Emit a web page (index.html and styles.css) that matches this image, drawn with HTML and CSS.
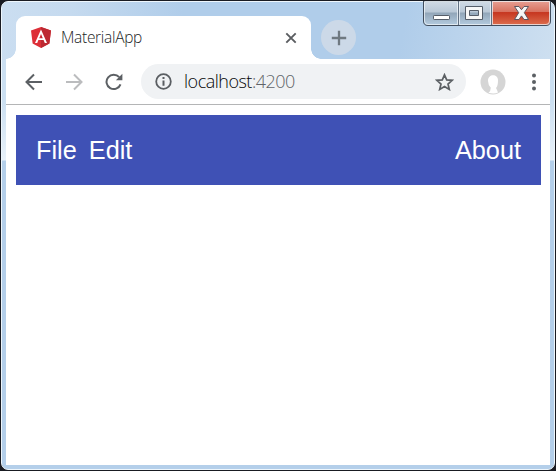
FILE: index.html
```html
<!DOCTYPE html>
<html lang="en">
<head>
<meta charset="utf-8">
<title>MaterialApp</title>
<link rel="stylesheet" href="styles.css">
</head>
<body>
<div class="window">
  <header class="titlebar">
    <div class="tab">
      <svg class="logo" width="20" height="21" viewBox="0 0 20 21"><path fill="#dd2f38" d="M10 0 20 3.6 18.4 16.4 10 21 1.6 16.4 0 3.6Z"/><path fill="#bd2932" d="M10 0 20 3.6 18.4 16.4 10 21Z"/><path fill="#fff" fill-rule="evenodd" d="M10 2.6 4 16H6.2L7.4 13H12.6L13.8 16H16ZM10 7 11.8 11.2H8.2Z"/></svg>
      <span class="tab-title">MaterialApp</span>
      <svg class="tab-close" width="12" height="12" viewBox="0 0 12 12"><path d="M1.3 1.3 10.7 10.7M10.7 1.3 1.3 10.7" stroke="#5a5d60" stroke-width="1.9"/></svg>
    </div>
    <div class="new-tab"><svg width="16" height="16" viewBox="0 0 16 16"><path d="M8 .8V15.2M.8 8H15.2" stroke="#6f7981" stroke-width="2.3"/></svg></div>
    <svg class="controls" width="128" height="26" viewBox="0 0 128 26">
      <defs>
        <linearGradient id="glass" x2="0" y2="1"><stop offset="0" stop-color="#d1dbe6"/><stop offset=".46" stop-color="#b8c7d6"/><stop offset=".48" stop-color="#91a5b8"/><stop offset="1" stop-color="#b5cce0"/></linearGradient>
        <linearGradient id="red" x2="0" y2="1"><stop offset="0" stop-color="#e8a094"/><stop offset=".46" stop-color="#d7705e"/><stop offset=".48" stop-color="#c63620"/><stop offset="1" stop-color="#dc6d4e"/></linearGradient>
      </defs>
      <path d="M.5 0V20Q.5 24.5 5 24.5H123Q127.500 24.500 127.500 20V0Z" fill="url(#glass)" stroke="#424e5e"/>
      <path d="M69 0H127V20Q127 24 123 24H69Z" fill="url(#red)"/>
      <path d="M1.500 1V20Q1.500 23.500 5 23.500H34.500V.5H1.500M36.500 .5H67.500V23.500H36.500ZM69.500 .5H126.500V20Q126.500 23.500 123 23.500H69.500Z" fill="none" stroke="#eff4f8" stroke-opacity=".75"/>
      <path d="M35.500 0V24M68.500 0V24" stroke="#627183"/>
      <rect x="10.500" y="14.500" width="16" height="4" rx=".7" fill="#fff" stroke="#555d69"/>
      <path fill="#f7f7f7" fill-rule="evenodd" stroke="#555d69" d="M42.500 5.500H59.500V18.500H42.500ZM46.500 9.500V14.500H55.500V9.500Z"/>
      <path fill="#f6f6f6" stroke="#5d5660" stroke-linejoin="round" d="M91.500 5.500H96L98.500 8.700 101 5.500H105.500L101.300 11.700 105.500 18.500H101L98.500 14.900 96 18.500H91.500L95.700 11.700Z"/>
    </svg>
  </header>
  <div class="toolbar">
    <svg class="back" width="18" height="18" viewBox="0 0 18 18"><path d="M17 9H2M9 1.500 1.500 9 9 16.500"/></svg>
    <svg class="forward" width="18" height="18" viewBox="0 0 18 18"><path d="M1 9H16M9 1.500 16.500 9 9 16.500"/></svg>
    <svg class="reload" width="18" height="18" viewBox="0 0 18 18"><path d="M15.500 11.300A7.200 7.200 0 1 1 14.200 4.200" fill="none" stroke="#5c6064" stroke-width="2"/><path d="M17.400 .7V7.200H10.900Z" fill="#5c6064"/></svg>
    <div class="address">
      <svg width="17" height="17" viewBox="0 0 17 17"><circle cx="8.500" cy="8.500" r="7.300" fill="none" stroke="#5a5e62" stroke-width="1.800"/><path d="M8.500 4V6M8.500 7.600V12.800" stroke="#5a5e62" stroke-width="2"/></svg>
      <span class="url">localhost<span class="port">:4200</span></span>
      <svg class="star" width="19" height="18" viewBox="0 0 19 18"><path d="M9.500 1.800 11.700 6.900 17.200 7.300 13 11 14.300 16.400 9.500 13.500 4.700 16.400 6 11 1.800 7.300 7.300 6.900Z" fill="none" stroke="#5c6064" stroke-width="1.700"/></svg>
    </div>
    <svg class="avatar" width="26" height="26" viewBox="0 0 26 26"><circle cx="13" cy="13" r="12.500" fill="#d5d5d5"/><path d="M8 12C7.700 4.500 18 4.300 18 11 18 15 17.500 17.500 16 19L17 21 18 23.500Q14 25.500 8.500 23.800 10.800 22 10.800 18.800 8.200 16.500 8 12Z" fill="#fff"/></svg>
    <svg class="more" width="4" height="18" viewBox="0 0 4 18"><g fill="#5c6064"><circle cx="2" cy="2.500" r="2"/><circle cx="2" cy="9" r="2"/><circle cx="2" cy="15.500" r="2"/></g></svg>
  </div>
  <main class="page">
    <nav class="menu"><span>File</span><span>Edit</span><span class="about">About</span></nav>
  </main>
</div>
</body>
</html>
```
FILE: styles.css
```css
* { box-sizing: border-box; }
body { margin: 0; background: #191b22; }
.window {
  width: 554px; height: 469px; margin: 1px; padding: 0 4px 4px;
  border: 1px solid #eef6fc; border-radius: 7px;
  display: flex; flex-direction: column;
  background: linear-gradient(#cbdff1 0, #cbdff1 100px, #e8f1f9 158px, #b4cfea 159px, #b4cfea 100%);
  position: relative;
}
.window::before {
  content: ""; position: absolute; inset: 0 0 auto; height: 58px; border-radius: 6px 6px 0 0;
  background: linear-gradient(100deg, #cbdef1 0, #c5daef 70px, #b0cdea 180px, #b0cdea 400px, #bfd6ed 480px, #cddff0 550px);
}
.titlebar { position: relative; height: 57px; flex: none; display: flex; align-items: flex-end; padding-left: 10px; }
.tab {
  position: relative; width: 295px; height: 43px; flex: none; padding: 0 14px 0 15px;
  background: #fff; border-radius: 9px 9px 0 0; display: flex; align-items: center;
}
.tab::before, .tab::after { content: ""; position: absolute; bottom: 0; width: 10px; height: 10px; }
.tab::before { left: -10px; background: radial-gradient(circle at 0 0, transparent 9.5px, #fff 10px); }
.tab::after { right: -10px; background: radial-gradient(circle at 100% 0, transparent 9.5px, #fff 10px); }
.tab-title { margin: 0 0 1px 10px; font: 300 15.500px/20px "Open Sans", sans-serif; color: #222426; letter-spacing: -.3px; }
.tab-close { margin-left: auto; }
.new-tab {
  width: 35px; height: 35px; margin: 0 0 4px 10px; border-radius: 50%; background: #ccd9e8;
  display: flex; align-items: center; justify-content: center;
}
.controls { margin-left: auto; margin-right: -1px; align-self: flex-start; margin-top: -1px; }
.toolbar {
  position: relative; height: 46px; flex: none; background: #fff; border-bottom: 1px solid #b4b5b6;
  display: flex; align-items: center; padding: 0 14px 0 19px;
}
.back, .forward { fill: none; stroke: #5c6064; stroke-width: 2; }
.forward { stroke: #bbbcbe; margin-left: 22px; }
.reload { margin-left: 22px; }
.address {
  width: 325px; height: 35px; margin-left: 18px; border-radius: 18px; background: #f0f2f4;
  display: flex; align-items: center; padding: 0 12px 0 14px;
}
.url { margin: 0 0 1px 12px; font: 300 18px/24px "Open Sans", sans-serif; color: #050607; letter-spacing: -.5px; }
.port { color: #606468; }
.star { margin-left: auto; }
.avatar { margin-left: 14px; }
.more { margin-left: auto; }
.page { flex: 1; background: #fff; padding: 10px 9px 0 10px; }
.menu {
  height: 70px; background: #3f51b5; color: #fff; padding: 0 20px;
  display: flex; align-items: center; gap: 12px; font: 25.300px/30px "Liberation Sans", Arial, sans-serif;
}
.about { margin-left: auto; }
```
